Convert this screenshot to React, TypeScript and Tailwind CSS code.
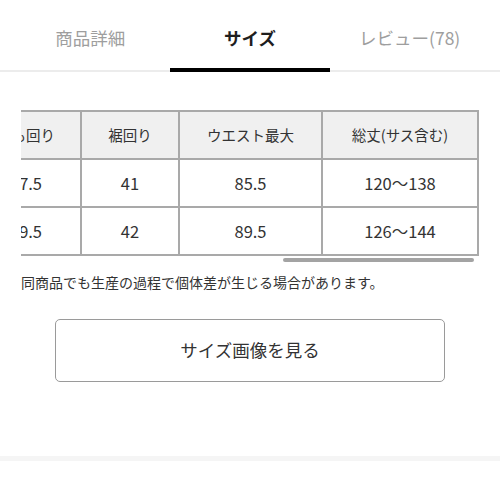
import React from "react";

const font = { fontFamily: '"Noto Sans CJK JP", "Noto Sans", sans-serif' };

const headers = ["サイズ", "ウエスト", "ヒップ", "股上", "股下", "もも回り", "裾回り", "ウエスト最大", "総丈(サス含む)"];
const rows = [
  ["S", "66", "96", "32", "68", "57.5", "41", "85.5", "120〜138"],
  ["M", "70", "100", "33", "69", "59.5", "42", "89.5", "126〜144"],
];

export default function App() {
  return (
    <div className="w-[500px] h-[500px] bg-white overflow-hidden" style={font}>
      {/* Tabs */}
      <div className="grid grid-cols-3 px-[10.5px] h-[72px] shadow-[inset_0_-2px_0_#ececec]">
        {[
          { label: "商品詳細", active: false },
          { label: "サイズ", active: true },
          { label: "レビュー(78)", active: false },
        ].map((t) => (
          <div key={t.label} className="relative flex items-center justify-center pt-[9px] pb-[4px]">
            <span
              className={
                t.active
                  ? "text-[17.5px] font-bold text-[#1e1e1e]"
                  : "text-[17.5px] text-[#9e9e9e]"
              }
            >
              {t.label}
            </span>
            {t.active && <div className="absolute left-0 right-0 bottom-0 h-[4px] bg-black" />}
          </div>
        ))}
      </div>

      {/* Table */}
      <div className="mx-[21px] mt-[38px]">
        <div className="flex justify-end overflow-hidden">
          <div className="shrink-0 grid grid-cols-[90px_90px_90px_90px_90px_108px_96px_141px_154px] gap-[2px] p-[2px] bg-[#a9a9a9] text-[14.5px] text-[#333]">
            {headers.map((h) => (
              <div key={h} className="h-[46px] bg-[#f0f0f0] flex items-center justify-center whitespace-nowrap">
                {h}
              </div>
            ))}
            {rows.map((r, i) =>
              r.map((c, j) => (
                <div key={`${i}-${j}`} className="h-[46px] bg-white flex items-center justify-center whitespace-nowrap text-[16.5px]">
                  {c}
                </div>
              ))
            )}
          </div>
        </div>
        <div className="flex justify-end mt-[2px] pr-[5px]">
          <div className="w-[191px] h-[4px] rounded-full bg-[#a3a3a3]" />
        </div>
      </div>

      {/* Note */}
      <p className="mx-[21px] mt-[10px] text-[14px] leading-[20px] text-[#333] whitespace-nowrap">
        同商品でも生産の過程で個体差が生じる場合があります。
      </p>

      {/* Button */}
      <div className="mx-[55px] mt-[27px]">
        <button className="w-full h-[63px] border border-[#9a9a9a] rounded-[5px] bg-white flex items-center justify-center text-[17.5px] text-[#333]">
          サイズ画像を見る
        </button>
      </div>

      <div className="mt-[74px] h-[5px] bg-[#f5f5f5]" />
    </div>
  );
}
